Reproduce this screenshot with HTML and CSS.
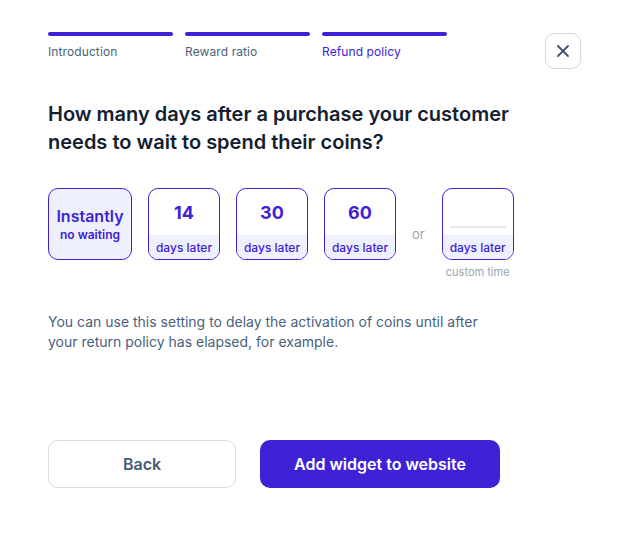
FILE: index.html
```html
<!DOCTYPE html>
<html>
<head>
<meta charset="utf-8">
<link rel="stylesheet" href="styles.css">
</head>
<body>
<div class="page">
  <div class="top">
    <div class="steps">
      <div class="step"><div class="bar"></div><div class="step-label">Introduction</div></div>
      <div class="step"><div class="bar"></div><div class="step-label">Reward ratio</div></div>
      <div class="step"><div class="bar"></div><div class="step-label active">Refund policy</div></div>
    </div>
    <button class="close" aria-label="Close">
      <svg width="14" height="14" viewBox="0 0 14 14"><path d="M2 2L12 12M12 2L2 12" stroke="#3e5270" stroke-width="1.8" stroke-linecap="round"/></svg>
    </button>
  </div>

  <h1 class="title">How many days after a purchase your customer needs to wait to spend their coins?</h1>

  <div class="options">
    <div class="opt opt-wide selected">
      <div class="big">Instantly</div>
      <div class="sub">no waiting</div>
    </div>
    <div class="opt">
      <div class="num">14</div>
      <div class="foot">days later</div>
    </div>
    <div class="opt">
      <div class="num">30</div>
      <div class="foot">days later</div>
    </div>
    <div class="opt">
      <div class="num">60</div>
      <div class="foot">days later</div>
    </div>
    <div class="or">or</div>
    <div class="custom-col">
      <div class="opt">
        <div class="num custom-num"><span class="line"></span></div>
        <div class="foot">days later</div>
      </div>
      <div class="custom-label">custom time</div>
    </div>
  </div>

  <p class="note">You can use this setting to delay the activation of coins until after your return policy has elapsed, for example.</p>

  <div class="actions">
    <button class="btn btn-back">Back</button>
    <button class="btn btn-primary">Add widget to website</button>
  </div>
</div>
</body>
</html>
```

FILE: styles.css
```css
* { box-sizing: border-box; }
body {
  margin: 0;
  background: #fff;
  font-family: Inter, "Noto Sans", sans-serif;
}
.page {
  padding: 32px 49px 0 48px;
}
.top {
  display: flex;
  justify-content: space-between;
  align-items: flex-start;
}
.steps {
  display: flex;
  gap: 12px;
}
.step { width: 125px; }
.bar {
  height: 4px;
  border-radius: 2px;
  background: #3f22d6;
}
.step-label {
  margin-top: 8px;
  font-size: 12px;
  line-height: 16px;
  color: #4a5f7c;
  letter-spacing: 0.1px;
}
.step-label.active { color: #3f22d6; }
.close {
  margin-top: 1px;
  width: 36px;
  height: 36px;
  border: 1px solid #cfdae6;
  border-radius: 9px;
  background: #fff;
  display: flex;
  align-items: center;
  justify-content: center;
  padding: 0;
}
.title {
  margin: 31px 0 0;
  font-size: 20px;
  line-height: 28px;
  font-weight: 600;
  color: #14202f;
  width: 475px;
  letter-spacing: 0;
}
.options {
  margin-top: 32px;
  display: flex;
  align-items: flex-start;
  gap: 16px;
}
.opt {
  width: 72px;
  height: 72px;
  border: 1px solid #3f22d6;
  border-radius: 10px;
  overflow: hidden;
  display: flex;
  flex-direction: column;
  background: #fff;
}
.opt-wide {
  width: 84px;
  justify-content: center;
  align-items: center;
}
.selected { background: #eef0fd; }
.big {
  font-size: 16px;
  line-height: 20px;
  font-weight: 600;
  color: #3f22d6;
}
.sub {
  font-size: 12px;
  line-height: 16px;
  font-weight: 600;
  color: #3f22d6;
  margin-top: 1px;
}
.num {
  flex: 1;
  display: flex;
  align-items: center;
  justify-content: center;
  font-size: 18px;
  font-weight: 700;
  color: #3f22d6;
  padding-top: 1px;
}
.custom-num {
  align-items: flex-end;
  padding: 0 7px 7px;
}
.line {
  display: block;
  width: 100%;
  height: 2px;
  background: #e3e8ef;
}
.foot {
  height: 24px;
  background: #eef0fd;
  font-size: 12px;
  line-height: 24px;
  padding-top: 1px;
  font-weight: 500;
  color: #3f22d6;
  text-align: center;
}
.or {
  align-self: center;
  font-size: 13px;
  color: #9aa6b6;
  margin: 0 1px 0 0;
}
.custom-col {
  display: flex;
  flex-direction: column;
  align-items: center;
  width: 72px;
}
.custom-label {
  margin-top: 5px;
  font-size: 11px;
  line-height: 14px;
  color: #9aa6b6;
  white-space: nowrap;
}
.note {
  margin: 33px 0 0;
  width: 450px;
  font-size: 14px;
  line-height: 20px;
  color: #4a5f7c;
}
.actions {
  margin-top: 88px;
  display: flex;
  gap: 24px;
}
.btn {
  height: 48px;
  border-radius: 10px;
  font-family: Inter, "Noto Sans", sans-serif;
  font-size: 16px;
  font-weight: 600;
  cursor: pointer;
}
.btn-back {
  width: 188px;
  background: #fff;
  border: 1.5px solid #d3dde8;
  color: #465a76;
}
.btn-primary {
  width: 240px;
  background: #3f22d6;
  border: none;
  color: #fff;
}
```
